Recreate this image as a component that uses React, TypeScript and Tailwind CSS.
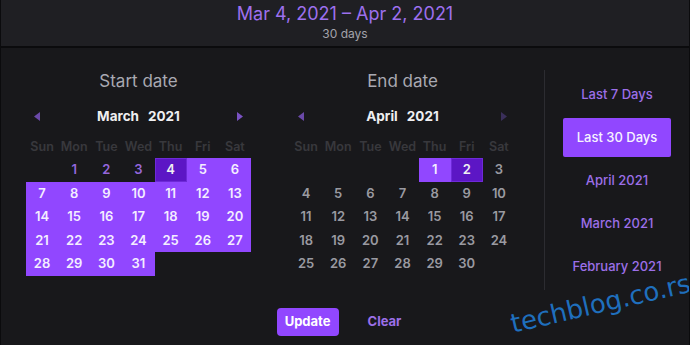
import React from "react";

type CellKind = "empty" | "before" | "range" | "end" | "normal";

const WEEK = ["Sun", "Mon", "Tue", "Wed", "Thu", "Fri", "Sat"];

function Calendar({
  title,
  month,
  cells,
  rightDim,
}: {
  title: string;
  month: string;
  cells: { d: string; k: CellKind }[];
  rightDim?: boolean;
}) {
  return (
    <div className="flex w-[225px] flex-col">
      <div className="flex h-[24px] items-center justify-center text-[17px] text-[#a9a9b2]">{title}</div>
      <div className="mt-[10px] flex h-[24px] items-center justify-between px-[8px]">
        <svg width="6" height="9" viewBox="0 0 6 9">
          <path d="M6 0 L0 4.5 L6 9 Z" fill="#6a49a8" />
        </svg>
        <div className="flex gap-[9px] text-[13.5px] font-bold text-[#efeff1]">
          <span>{month}</span>
          <span>2021</span>
        </div>
        <svg width="6" height="9" viewBox="0 0 6 9">
          <path d="M0 0 L6 4.5 L0 9 Z" fill={rightDim ? "#3a2f5a" : "#7a52c4"} />
        </svg>
      </div>
      <div className="mt-[8px] grid h-[22px] grid-cols-7 items-center text-center text-[12.5px] font-semibold text-[#38383d]">
        {WEEK.map((w) => (
          <span key={w}>{w}</span>
        ))}
      </div>
      <div className="grid grid-cols-7 auto-rows-[23.6px] text-[13px] font-semibold">
        {cells.map((c, i) => {
          let cls = "";
          if (c.k === "range") cls = "bg-[#9147ff] text-[#f4eeff]";
          else if (c.k === "end") cls = "bg-[#5c16c5] text-[#efeff1] ring-1 ring-inset ring-[#6e2ad8]";
          else if (c.k === "before") cls = "text-[#9567dc]";
          else if (c.k === "normal") cls = "text-[#9a9aa1]";
          return (
            <div key={i} className={"flex items-center justify-center " + cls}>
              {c.d}
            </div>
          );
        })}
      </div>
    </div>
  );
}

function buildMarch() {
  const cells: { d: string; k: CellKind }[] = [];
  for (let i = 0; i < 1; i++) cells.push({ d: "", k: "empty" });
  for (let d = 1; d <= 31; d++) {
    let k: CellKind = "range";
    if (d < 4) k = "before";
    else if (d === 4) k = "end";
    cells.push({ d: String(d), k });
  }
  return cells;
}

function buildApril() {
  const cells: { d: string; k: CellKind }[] = [];
  for (let i = 0; i < 4; i++) cells.push({ d: "", k: "empty" });
  for (let d = 1; d <= 30; d++) {
    let k: CellKind = "normal";
    if (d === 1) k = "range";
    else if (d === 2) k = "end";
    cells.push({ d: String(d), k });
  }
  return cells;
}

export default function App() {
  const presets = ["Last 7 Days", "Last 30 Days", "April 2021", "March 2021", "February 2021"];
  return (
    <div
      className="relative flex h-[345px] w-[690px] flex-col overflow-hidden border-x border-[#0b0b0d] bg-[#18181b]"
      style={{ fontFamily: "Inter, 'Noto Sans', sans-serif" }}
    >
      <div className="flex h-[48px] shrink-0 flex-col items-center border-b-2 border-[#0b0b0d] bg-[#1f1f23] pt-[2px]">
        <div className="text-[18px] leading-[24px] text-[#9d70ee]">Mar 4, 2021 – Apr 2, 2021</div>
        <div className="text-[12px] leading-[16px] text-[#a3a3ab]">30 days</div>
      </div>
      <div className="flex flex-1">
        <div className="flex gap-[39px] pl-[25px] pt-[22px]">
          <Calendar title="Start date" month="March" cells={buildMarch()} />
          <Calendar title="End date" month="April" cells={buildApril()} rightDim />
        </div>
        <div className="ml-[29px] mt-[22px] h-[220px] w-px bg-[#2c2c31]" />
        <div className="flex flex-1 flex-col items-center pt-[25px]">
          {presets.map((p, i) =>
            i === 1 ? (
              <div key={p} className="flex h-[43px] items-center">
                <div className="flex h-[39px] w-[108px] items-center justify-center rounded-[2px] bg-[#9147ff] text-[13px] font-medium text-[#f7f3ff]">
                  {p}
                </div>
              </div>
            ) : (
              <div key={p} className="flex h-[43px] items-center text-[13px] font-medium text-[#9c6fe8]">
                {p}
              </div>
            )
          )}
        </div>
      </div>
      <div className="flex h-[52px] shrink-0 items-start justify-center gap-[17px] pt-[15px]">
        <div className="flex h-[28px] w-[62px] items-center justify-center rounded-[4px] bg-[#9147ff] text-[13px] font-bold text-white">
          Update
        </div>
        <div className="flex h-[28px] items-center px-[12px] text-[13px] font-bold text-[#9c6fe8]">Clear</div>
      </div>
      <div
        className="pointer-events-none absolute left-[510px] top-[310px] origin-left -rotate-[13deg] text-[26px] leading-[28px] text-[#1f6fbd]"
        style={{ fontFamily: "'DejaVu Sans', sans-serif" }}
      >
        techblog.co.rs
      </div>
    </div>
  );
}
